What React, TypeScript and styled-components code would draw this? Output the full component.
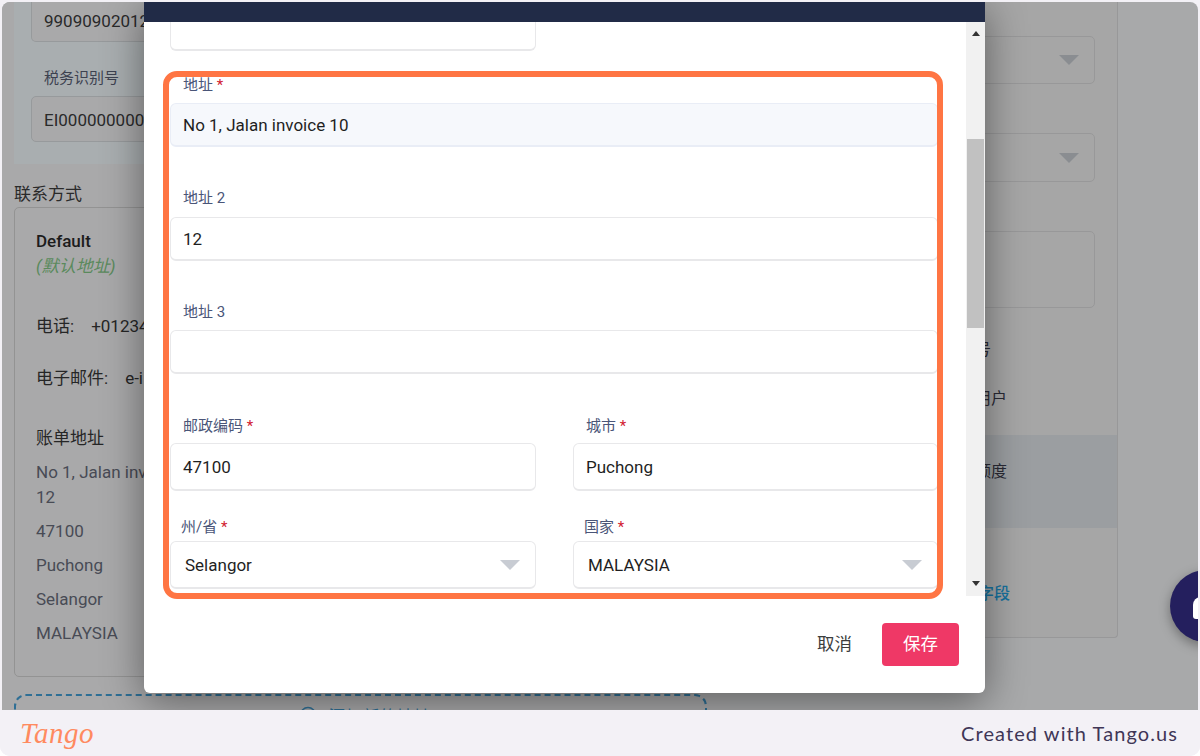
import styled, { createGlobalStyle } from "styled-components";
import { CirclePlus } from "lucide-react";

const GlobalStyle = createGlobalStyle`
  html, body {
    margin: 0;
    padding: 0;
    background: #ffffff;
  }
  * {
    box-sizing: border-box;
  }
  body {
    font-family: Roboto, "Noto Sans CJK SC", sans-serif;
  }
`;

const Required = () => <Star> *</Star>;

const App = () => {
  return (
    <Shell>
      <GlobalStyle />
      <Stage>
        <LeftColumn>
          <TaxSection>
            <ClippedField>99090902012</ClippedField>
            <BackLabel>税务识别号</BackLabel>
            <BackField>EI00000000000</BackField>
          </TaxSection>
          <SectionHeading>联系方式</SectionHeading>
          <ContactCard>
            <StrongLine>Default</StrongLine>
            <DefaultNote>(默认地址)</DefaultNote>
            <InfoLine $gap={36}>
              电话:<InfoValue>+01234</InfoValue>
            </InfoLine>
            <InfoLine $gap={28}>
              电子邮件:<InfoValue>e-i</InfoValue>
            </InfoLine>
            <InfoLine $gap={36}>账单地址</InfoLine>
            <AddressLine $gap={10}>No 1, Jalan inv</AddressLine>
            <AddressLine $gap={1}>12</AddressLine>
            <AddressLine $gap={10}>47100</AddressLine>
            <AddressLine $gap={10}>Puchong</AddressLine>
            <AddressLine $gap={10}>Selangor</AddressLine>
            <AddressLine $gap={10}>MALAYSIA</AddressLine>
          </ContactCard>
          <AddBox>
            <CirclePlus size={18} color="#2f6f95" />
            <AddText>添加新的地址</AddText>
          </AddBox>
        </LeftColumn>

        <RightPanel>
          <BackSelect $top={34} $height={48}>
            <BackCaret />
          </BackSelect>
          <BackSelect $top={49} $height={49}>
            <BackCaret />
          </BackSelect>
          <BackSelect $top={49} $height={77} />
          <MenuItem $top={30}>账户号</MenuItem>
          <MenuItem $top={25}>普通用户</MenuItem>
          <ActiveMenuItem>信用额度</ActiveMenuItem>
          <LinkText>添加字段</LinkText>
        </RightPanel>

        <Fab>
          <FabGlyph />
        </Fab>

        <Modal>
          <ModalHeader />
          <ModalBody>
            <FormViewport>
              <ClippedInput />
              <Field $top={24}>
                <FieldLabel>
                  地址
                  <Required />
                </FieldLabel>
                <TextBox $filled>No 1, Jalan invoice 10</TextBox>
              </Field>
              <Field $top={41} $labelGap={9}>
                <FieldLabel>地址 2</FieldLabel>
                <TextBox>12</TextBox>
              </Field>
              <Field $top={41}>
                <FieldLabel>地址 3</FieldLabel>
                <TextBox />
              </Field>
              <FieldRow $top={42}>
                <Field $labelGap={7}>
                  <FieldLabel>
                    邮政编码
                    <Required />
                  </FieldLabel>
                  <TallBox>47100</TallBox>
                </Field>
                <Field $labelGap={7}>
                  <FieldLabel>
                    城市
                    <Required />
                  </FieldLabel>
                  <TallBox>Puchong</TallBox>
                </Field>
              </FieldRow>
              <FieldRow $top={26}>
                <Field $labelGap={4}>
                  <SelectLabel>
                    州/省
                    <Required />
                  </SelectLabel>
                  <SelectBox>
                    Selangor
                    <SelectCaret />
                  </SelectBox>
                </Field>
                <Field $labelGap={4}>
                  <SelectLabel>
                    国家
                    <Required />
                  </SelectLabel>
                  <SelectBox>
                    MALAYSIA
                    <SelectCaret />
                  </SelectBox>
                </Field>
              </FieldRow>
            </FormViewport>
            <ScrollTrack>
              <ArrowUp />
              <ScrollThumb />
              <ArrowDown />
            </ScrollTrack>
          </ModalBody>
          <ModalFooter>
            <CancelButton>取消</CancelButton>
            <SaveButton>保存</SaveButton>
          </ModalFooter>
          <Highlight />
        </Modal>
      </Stage>
      <Footer>
        <Logo>Tango</Logo>
        <Credit>Created with Tango.us</Credit>
      </Footer>
    </Shell>
  );
};

const Shell = styled.div`
  width: 1200px;
  height: 756px;
  background: #f3f1f6;
  border-radius: 0 0 10px 10px;
  padding: 2px 2px 0;
  display: flex;
  flex-direction: column;
  overflow: hidden;
`;

const Stage = styled.main`
  position: relative;
  height: 708px;
  flex: none;
  display: flex;
  background: #a8a9aa;
  border-radius: 8px 8px 0 0;
  overflow: hidden;
`;

const LeftColumn = styled.section`
  width: 728px;
  flex: none;
  padding-left: 12px;
  background: #a9a9aa;
`;

const TaxSection = styled.div`
  height: 162px;
  width: 693px;
  background: #a9aeb0;
  padding-left: 17px;
`;

const ClippedField = styled.div`
  height: 40px;
  width: 300px;
  border: 1px solid #979a9c;
  border-top: none;
  border-radius: 0 0 5px 5px;
  background: #a9a9aa;
  padding: 7px 12px 0;
  font-size: 17px;
  line-height: 24px;
  color: #2a2a2a;
`;

const BackLabel = styled.div`
  margin: 26px 0 8px 13px;
  font-size: 15px;
  line-height: 20px;
  color: #3d4250;
`;

const BackField = styled.div`
  height: 46px;
  width: 300px;
  border: 1px solid #979a9c;
  border-radius: 5px;
  background: #a9a9aa;
  padding: 11px 12px;
  font-size: 17px;
  line-height: 24px;
  color: #2a2a2a;
  white-space: nowrap;
`;

const SectionHeading = styled.h3`
  margin: 18px 0 1px;
  font-size: 17px;
  font-weight: 400;
  line-height: 24px;
  color: #2a2a2a;
`;

const ContactCard = styled.div`
  width: 693px;
  height: 470px;
  border: 1px solid #939393;
  border-radius: 5px;
  padding: 21px 21px 0;
  background: #a9a9aa;
`;

const StrongLine = styled.div`
  font-size: 17px;
  font-weight: 500;
  line-height: 24px;
  color: #1c1c1c;
`;

const DefaultNote = styled.div`
  margin-top: 1px;
  font-size: 17px;
  font-style: italic;
  line-height: 24px;
  color: #5a8a5c;
`;

const InfoLine = styled.div<{ $gap: number }>`
  margin-top: ${(p) => p.$gap}px;
  font-size: 17px;
  line-height: 24px;
  color: #262626;
  white-space: nowrap;
`;

const InfoValue = styled.span`
  margin-left: 17px;
`;

const AddressLine = styled.div<{ $gap: number }>`
  margin-top: ${(p) => p.$gap}px;
  font-size: 17px;
  line-height: 24px;
  color: #484b55;
`;

const AddBox = styled.div`
  margin-top: 17px;
  width: 693px;
  height: 54px;
  border: 2px dashed #2f6f95;
  border-radius: 12px;
  display: flex;
  justify-content: center;
  gap: 12px;
  padding: 10px 0 0 8px;
`;

const AddText = styled.span`
  font-size: 17px;
  line-height: 22px;
  color: #2f6f95;
`;

const RightPanel = styled.aside`
  width: 388px;
  height: 636px;
  flex: none;
  background: #a6a6a6;
  border-right: 1px solid #989899;
  border-bottom: 1px solid #989899;
  border-radius: 0 0 4px 0;
  display: flex;
  flex-direction: column;
`;

const BackSelect = styled.div<{ $top: number; $height: number }>`
  margin: ${(p) => p.$top}px 22px 0 0;
  height: ${(p) => p.$height}px;
  flex: none;
  border: 1px solid #989899;
  border-radius: 5px;
  display: flex;
  justify-content: flex-end;
  align-items: center;
  padding-right: 15px;
`;

const BackCaret = styled.span`
  width: 0;
  height: 0;
  border-left: 10px solid transparent;
  border-right: 10px solid transparent;
  border-top: 10px solid #8a8d91;
`;

const MenuItem = styled.div<{ $top: number }>`
  margin-top: ${(p) => p.$top}px;
  padding-left: 213px;
  font-size: 16px;
  line-height: 24px;
  color: #2a2a35;
`;

const ActiveMenuItem = styled.div`
  margin-top: 24px;
  height: 93px;
  padding: 25px 0 0 213px;
  background: #9b9ea1;
  font-size: 16px;
  line-height: 24px;
  color: #2a2a35;
`;

const LinkText = styled.div`
  margin-top: 54px;
  padding-left: 216px;
  font-size: 16px;
  font-weight: 500;
  line-height: 24px;
  color: #17729e;
`;

const Fab = styled.div`
  position: absolute;
  left: 1168px;
  top: 568px;
  width: 72px;
  height: 72px;
  border-radius: 50%;
  background: #241f5e;
  box-shadow: 0 4px 12px rgba(0, 0, 0, 0.35);
`;

const FabGlyph = styled.span`
  position: absolute;
  left: 23px;
  top: 27px;
  width: 26px;
  height: 22px;
  border-radius: 8px 8px 3px 3px;
  background: #ffffff;
`;

const Modal = styled.div`
  position: absolute;
  left: 142px;
  top: 0;
  width: 841px;
  height: 691px;
  display: flex;
  flex-direction: column;
  background: #ffffff;
  border-radius: 0 0 6px 6px;
  box-shadow: 0 8px 42px rgba(0, 0, 0, 0.45);
`;

const ModalHeader = styled.header`
  height: 20px;
  flex: none;
  background: #212b47;
`;

const ModalBody = styled.div`
  height: 574px;
  flex: none;
  display: flex;
`;

const FormViewport = styled.div`
  flex: 1;
  min-width: 0;
  overflow: hidden;
  padding: 0 28px 0 26px;
`;

const ClippedInput = styled.div`
  width: 366px;
  height: 29px;
  border: 1px solid #e8e8ea;
  border-top: none;
  border-bottom-width: 2px;
  border-radius: 0 0 6px 6px;
`;

const Field = styled.div<{ $top?: number; $labelGap?: number }>`
  margin-top: ${(p) => p.$top ?? 0}px;
  display: flex;
  flex-direction: column;
  gap: ${(p) => p.$labelGap ?? 8}px;
`;

const FieldRow = styled.div<{ $top: number }>`
  margin-top: ${(p) => p.$top}px;
  display: grid;
  grid-template-columns: 366px 365px;
  column-gap: 37px;
`;

const FieldLabel = styled.label`
  padding-left: 13px;
  font-size: 15px;
  line-height: 20px;
  color: #4a5578;
`;

const SelectLabel = styled(FieldLabel)`
  padding-left: 11px;
`;

const Star = styled.span`
  color: #d1202f;
`;

const TextBox = styled.div<{ $filled?: boolean }>`
  height: 44px;
  flex: none;
  border: 1px solid ${(p) => (p.$filled ? "#e9edf6" : "#e8e8ea")};
  border-bottom-width: 2px;
  border-radius: 6px;
  background: ${(p) => (p.$filled ? "#f6f8fc" : "#ffffff")};
  padding: 9px 12px;
  font-size: 17px;
  line-height: 24px;
  color: #1f1f1f;
`;

const TallBox = styled(TextBox)`
  height: 48px;
  padding: 11px 12px;
`;

const SelectBox = styled(TallBox)`
  position: relative;
  padding-left: 14px;
`;

const SelectCaret = styled.span`
  position: absolute;
  right: 15px;
  top: 18px;
  width: 0;
  height: 0;
  border-left: 10px solid transparent;
  border-right: 10px solid transparent;
  border-top: 10px solid #c8ccd3;
`;

const ScrollTrack = styled.div`
  width: 19px;
  flex: none;
  background: #f1f1f1;
  display: flex;
  flex-direction: column;
  align-items: center;
`;

const ArrowUp = styled.span`
  margin-top: 9px;
  width: 0;
  height: 0;
  border-left: 4.5px solid transparent;
  border-right: 4.5px solid transparent;
  border-bottom: 5px solid #333333;
`;

const ScrollThumb = styled.div`
  margin-top: 103px;
  width: 17px;
  height: 189px;
  background: #c1c1c1;
`;

const ArrowDown = styled.span`
  margin-top: auto;
  margin-bottom: 10px;
  width: 0;
  height: 0;
  border-left: 4.5px solid transparent;
  border-right: 4.5px solid transparent;
  border-top: 5px solid #333333;
`;

const ModalFooter = styled.footer`
  padding: 27px 26px 0 0;
  display: flex;
  justify-content: flex-end;
  align-items: flex-start;
  gap: 30px;
`;

const CancelButton = styled.div`
  height: 43px;
  font-size: 17.5px;
  line-height: 43px;
  color: #3d3d3d;
`;

const SaveButton = styled.div`
  width: 77px;
  height: 43px;
  border-radius: 4px;
  background: #ef3866;
  color: #ffffff;
  font-size: 17.5px;
  line-height: 43px;
  text-align: center;
`;

const Highlight = styled.div`
  position: absolute;
  left: 19px;
  top: 69px;
  width: 780px;
  height: 528px;
  border: 6px solid #ff7543;
  border-radius: 14px;
  pointer-events: none;
`;

const Footer = styled.footer`
  position: relative;
  height: 46px;
  flex: none;
  margin: 0 -2px;
  padding: 0 22px 0 20px;
  display: flex;
  justify-content: space-between;
  align-items: center;
  background: #f3f1f6;
`;

const Logo = styled.span`
  font-family: "Liberation Serif", serif;
  font-style: italic;
  font-size: 29px;
  line-height: 46px;
  letter-spacing: 0.5px;
  color: #ff8a5f;
`;

const Credit = styled.span`
  font-family: Lato, sans-serif;
  font-size: 20px;
  letter-spacing: 1.08px;
  color: #3f3656;
`;

export default App;
